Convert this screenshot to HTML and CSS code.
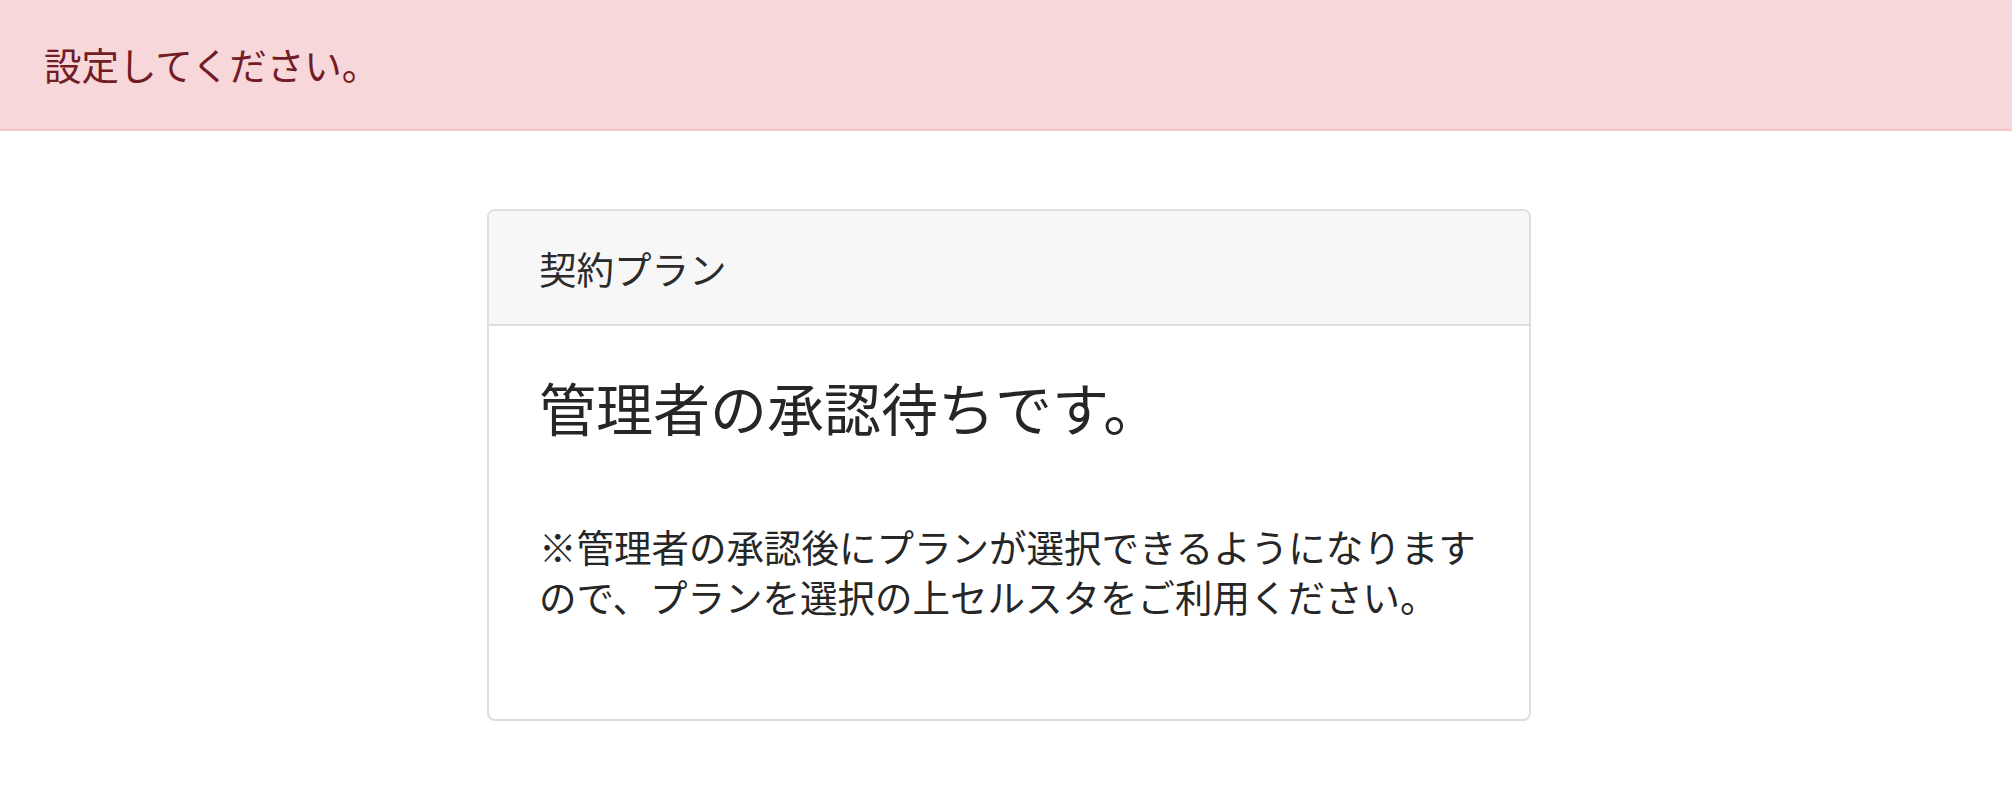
FILE: index.html
```html
<!DOCTYPE html>
<html lang="ja">
<head>
<meta charset="utf-8">
<title>契約プラン</title>
<link rel="stylesheet" href="styles.css">
</head>
<body>
<div class="alert">設定してください。</div>
<main class="page">
  <section class="card">
    <header class="card-header">契約プラン</header>
    <div class="card-body">
      <h3 class="card-title">管理者の承認待ちです。</h3>
      <p class="card-text">※管理者の承認後にプランが選択できるようになりますので、プランを選択の上セルスタをご利用ください。</p>
    </div>
  </section>
</main>
</body>
</html>
```
FILE: styles.css
```css
html, body {
  margin: 0;
  padding: 0;
  background: #ffffff;
}
body {
  font-family: "Noto Sans CJK JP", "Noto Sans", sans-serif;
  color: #2b2b2b;
  font-size: 37px;
}
.alert {
  background: #f8d7da;
  color: #721c24;
  border-bottom: 2px solid #f5c6cb;
  font-size: 37.5px;
  line-height: 52px;
  padding: 38px 0 39px 44px;
}
.page {
  padding-top: 78px;
  display: flex;
  justify-content: center;
}
.card {
  width: 1044px;
  margin-left: 6px;
  box-sizing: border-box;
  border: 2px solid #dedede;
  border-radius: 8px;
  overflow: hidden;
  background: #fff;
}
.card-header {
  background: #f7f7f7;
  border-bottom: 2px solid #dedede;
  padding: 31px 50px 30px;
  line-height: 52px;
  font-size: 37.5px;
  color: #2b2b2b;
}
.card-body {
  padding: 46px 50px 98px;
}
.card-title {
  margin: 0;
  font-weight: 400;
  font-size: 57px;
  line-height: 68px;
  color: #262626;
}
.card-text {
  margin: 81px 0 0;
  font-size: 37.5px;
  line-height: 50px;
  color: #262626;
}
```
